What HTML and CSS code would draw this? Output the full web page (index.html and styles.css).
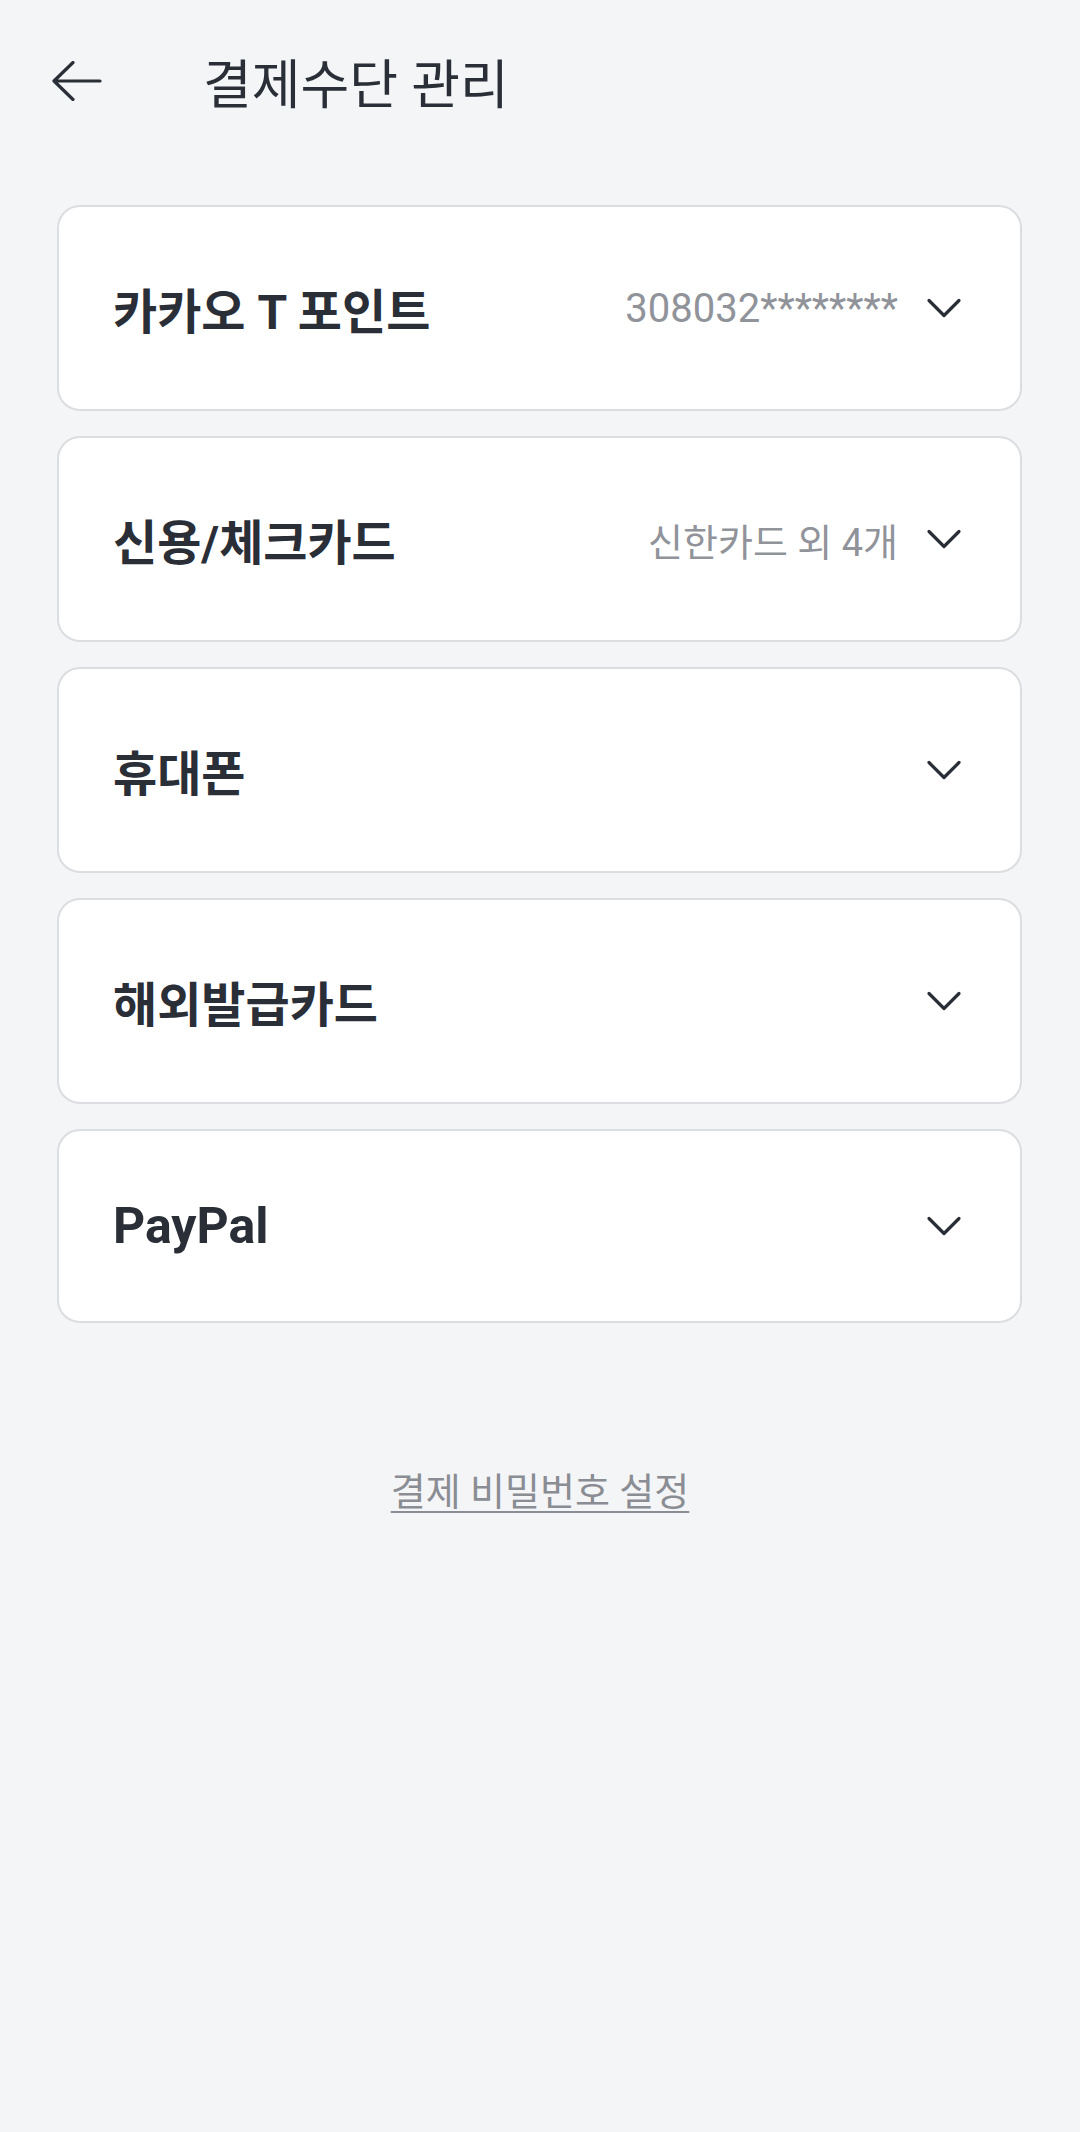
FILE: index.html
```html
<!DOCTYPE html>
<html lang="ko">
<head>
<meta charset="utf-8">
<title>결제수단 관리</title>
<link rel="stylesheet" href="styles.css">
</head>
<body>
<div class="screen">
  <header class="header">
    <button class="back" aria-label="뒤로">
      <svg width="52" height="40" viewBox="0 0 52 40" fill="none" stroke="#2a2e37" stroke-width="3.2" stroke-linecap="round" stroke-linejoin="round"><path d="M3 20H49M22 1.5L3 20L22 38.5"/></svg>
    </button>
    <h1 class="title">결제수단 관리</h1>
  </header>

  <main class="list">
    <div class="card">
      <span class="card-title">카카오 T 포인트</span>
      <span class="card-meta">308032********</span>
      <svg class="chev" width="48" height="48" viewBox="0 0 48 48" fill="none" stroke="#2a2e37" stroke-width="3.2" stroke-linecap="round" stroke-linejoin="round"><path d="M9 16.5L24 31.5L39 16.5"/></svg>
    </div>
    <div class="card">
      <span class="card-title">신용/체크카드</span>
      <span class="card-meta card-meta-ko">신한카드 외 4개</span>
      <svg class="chev" width="48" height="48" viewBox="0 0 48 48" fill="none" stroke="#2a2e37" stroke-width="3.2" stroke-linecap="round" stroke-linejoin="round"><path d="M9 16.5L24 31.5L39 16.5"/></svg>
    </div>
    <div class="card">
      <span class="card-title">휴대폰</span>
      <svg class="chev" width="48" height="48" viewBox="0 0 48 48" fill="none" stroke="#2a2e37" stroke-width="3.2" stroke-linecap="round" stroke-linejoin="round"><path d="M9 16.5L24 31.5L39 16.5"/></svg>
    </div>
    <div class="card">
      <span class="card-title">해외발급카드</span>
      <svg class="chev" width="48" height="48" viewBox="0 0 48 48" fill="none" stroke="#2a2e37" stroke-width="3.2" stroke-linecap="round" stroke-linejoin="round"><path d="M9 16.5L24 31.5L39 16.5"/></svg>
    </div>
    <div class="card">
      <span class="card-title card-title-latin">PayPal</span>
      <svg class="chev" width="48" height="48" viewBox="0 0 48 48" fill="none" stroke="#2a2e37" stroke-width="3.2" stroke-linecap="round" stroke-linejoin="round"><path d="M9 16.5L24 31.5L39 16.5"/></svg>
    </div>
  </main>

  <div class="footer">
    <a class="pw-link" href="#">결제 비밀번호 설정</a>
  </div>
</div>
</body>
</html>
```

FILE: styles.css
```css
* { box-sizing: border-box; }

html, body {
  margin: 0;
  padding: 0;
  background: #f4f5f7;
}

body {
  font-family: Roboto, "Noto Sans CJK KR", sans-serif;
  color: #2a2e37;
}

.screen {
  width: 1080px;
  min-height: 2132px;
  background: #f4f5f7;
}

.header {
  height: 172px;
  display: flex;
  align-items: center;
  padding-left: 51px;
  padding-bottom: 10px;
}

.back {
  border: 0;
  background: none;
  padding: 0;
  margin: 0;
  width: 52px;
  height: 40px;
  display: flex;
}

.title {
  margin: 0 0 0 100px;
  font-size: 53px;
  font-weight: 400;
  line-height: normal;
  color: #2a2e37;
}

.list {
  margin-top: 33px;
  padding: 0 58px 0 57px;
  display: flex;
  flex-direction: column;
  gap: 25px;
}

.card {
  background: #ffffff;
  border: 2px solid #dcdde0;
  border-radius: 23px;
  padding: 66px 52px 66px 54px;
  display: flex;
  align-items: center;
}

.card-title {
  flex: 1;
  font-size: 48px;
  font-weight: 700;
  line-height: normal;
  color: #2a2e37;
}

.card-title-latin {
  font-size: 50px;
}

.card-meta {
  font-size: 40px;
  font-weight: 400;
  color: #909399;
  margin-right: 22px;
}

.card-meta-ko {
  font-size: 38px;
}

.chev {
  flex: none;
  display: block;
}

.footer {
  margin-top: 138px;
  display: flex;
  justify-content: center;
}

.pw-link {
  font-size: 38px;
  color: #8a8d93;
  text-decoration: underline;
  text-decoration-thickness: 2px;
  text-underline-offset: 6px;
}
```
